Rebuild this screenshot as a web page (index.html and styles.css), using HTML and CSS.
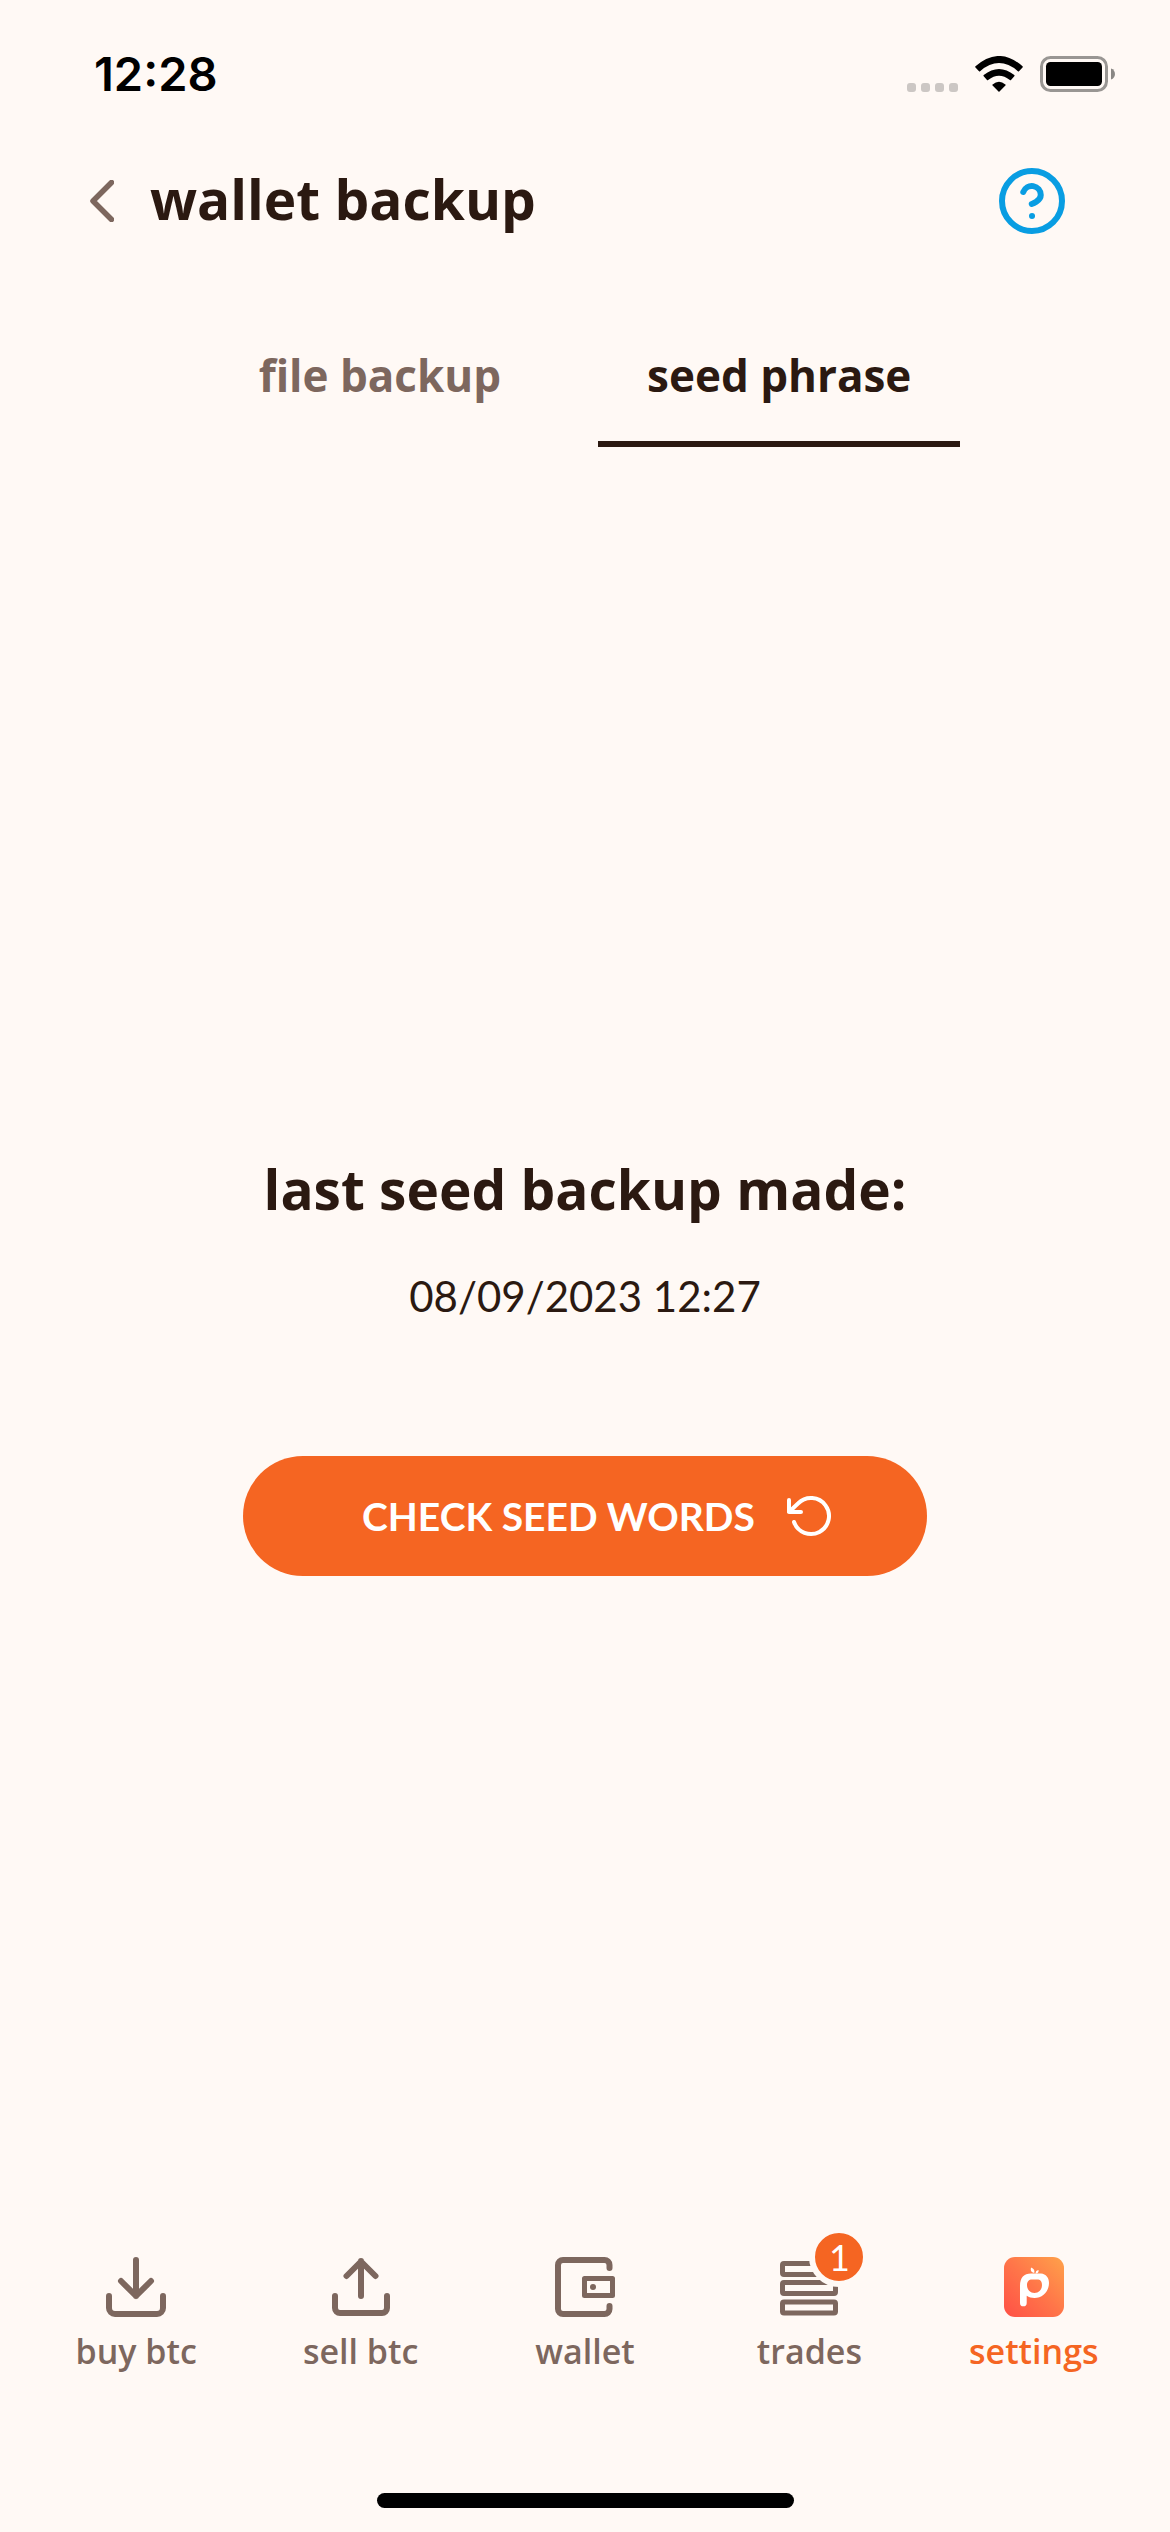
FILE: index.html
```html
<!DOCTYPE html>
<html lang="en">
<head>
<meta charset="utf-8">
<meta name="viewport" content="width=device-width, initial-scale=1">
<title>wallet backup</title>
<link rel="stylesheet" href="styles.css">
</head>
<body>
<div class="app">
  <div class="status">
    <span class="clock">12:28</span>
    <div class="indicators">
      <div class="signal"><i></i><i></i><i></i><i></i></div>
      <svg class="wifi" viewBox="0 0 48 36" aria-hidden="true">
        <path d="M.5 11.5a.8.8 0 0 1 0-1.200Q24-10.400 47.500 10.300a.8.8 0 0 1 0 1.200L44 15.200a.8.8 0 0 1-1.100 0Q24-1 5.100 15.200a.8.8 0 0 1-1.100 0Z"/>
        <path d="M8.700 20.200a.8.8 0 0 1 0-1.200Q24 7 39.300 19a.8.8 0 0 1 0 1.200L36 24a.8.8 0 0 1-1.100 0Q24 15.300 13.100 24A.8.8 0 0 1 12 24Z"/>
        <path d="M17.600 29.600a.8.8 0 0 1 0-1.200Q24 23.200 30.400 28.400a.8.8 0 0 1 0 1.200L24.500 35.600a.8.8 0 0 1-1 0Z"/>
      </svg>
      <svg class="battery" viewBox="0 0 76 36" aria-hidden="true">
        <rect x="1.500" y="1.500" width="65" height="33" rx="9" fill="none" stroke="#999693" stroke-width="3"/>
        <rect x="6" y="6" width="56" height="24" rx="4.500"/>
        <path d="M71 12.500c5.300 1.600 5.300 9.400 0 11Z" fill="#8a8784"/>
      </svg>
    </div>
  </div>

  <header class="header">
    <button class="icon-button back" aria-label="back">
      <svg width="24" height="42" viewBox="0 0 24 42"><path d="M21.500 2.500 3 21l18.500 18.500" stroke-width="5.500"/></svg>
    </button>
    <h1 class="title">wallet backup</h1>
    <button class="icon-button help" aria-label="help">
      <svg width="66" height="66" viewBox="1 1 22 22"><circle cx="12" cy="12" r="10"/><path d="M9.090 9a3 3 0 0 1 5.830 1c0 2-3 3-3 3M12 17h.01"/></svg>
    </button>
  </header>

  <div class="tabs" role="tablist">
    <button class="tab" role="tab" aria-selected="false">file backup</button>
    <button class="tab active" role="tab" aria-selected="true">seed phrase</button>
  </div>

  <main class="content">
    <h2 class="heading">last seed backup made:</h2>
    <p class="date">08/09/2023 12:27</p>
    <button class="primary">
      <span>CHECK SEED WORDS</span>
      <svg width="48" height="48" viewBox="0 0 24 24" aria-hidden="true"><path d="M1 4v6h6M3.510 15a9 9 0 1 0 2.130-9.360L1 10"/></svg>
    </button>
  </main>

  <nav class="nav">
    <a class="item" href="#buy">
      <svg viewBox="0 0 60 60"><path d="M3 39v12a6 6 0 0 0 6 6h42a6 6 0 0 0 6-6V39M30 3v36M15 24l15 15 15-15"/></svg>
      <span>buy btc</span>
    </a>
    <a class="item" href="#sell">
      <svg viewBox="0 0 60 60"><path d="M4 39v12a5 5 0 0 0 5 5h42a5 5 0 0 0 5-5V39M30 39V4M15.500 19 30 4.500 44.500 19"/></svg>
      <span>sell btc</span>
    </a>
    <a class="item" href="#wallet">
      <svg viewBox="0 0 60 60"><path d="M54.500 11V8a5 5 0 0 0-5-5H8a5 5 0 0 0-5 5v44a5 5 0 0 0 5 5h41.500a5 5 0 0 0 5-5v-3"/><rect x="29.500" y="21.500" width="28" height="17" stroke-width="5"/><circle class="dot" cx="38" cy="30" r="3"/></svg>
      <span>wallet</span>
    </a>
    <a class="item" href="#trades">
      <svg viewBox="0 0 60 60" class="stack"><rect x="3.500" y="6.500" width="53" height="11" rx="1.500"/><rect x="3.500" y="25.500" width="53" height="11" rx="1.500"/><rect x="3.500" y="45" width="53" height="11" rx="1.500"/></svg>
      <span>trades</span>
      <b class="badge">1</b>
    </a>
    <a class="item current" href="#settings">
      <svg viewBox="0 0 60 60" class="logo">
        <defs><linearGradient id="peach" x1="0" y1="1" x2="1" y2="0"><stop offset="0" stop-color="#ff5046"/><stop offset=".5" stop-color="#ff7549"/><stop offset="1" stop-color="#ffa24a"/></linearGradient></defs>
        <rect width="60" height="60" rx="11" fill="url(#peach)"/>
        <path fill="#fff" fill-rule="evenodd" d="M16 29C16 20.500 20 16.500 27 16.500h10c5 .5 8 4 8 9.500 0 9-7 15-14.500 15-3 0-5.500-.8-7.800-2.200V46a3.350 3.350 0 0 1-6.700 0ZM23 28c0 4.500 3 8 7.500 8s7.500-3.500 7.500-8c0-3.500-1.500-5.500-5-5.500h-5c-3 0-5 2-5 5.500Z"/>
        <path fill="#fff" d="M27 10.500c3 1 4 3 3.200 5.500-3-.5-4-2.500-3.200-5.500ZM34.500 13c.5 2-.5 3.300-2.800 3.500-.2-2 .8-3.200 2.800-3.500Z"/>
      </svg>
      <span>settings</span>
    </a>
  </nav>
  <div class="home"></div>
</div>
</body>
</html>
```
FILE: styles.css
```css
* { box-sizing: border-box; }
body {
  margin: 0;
  background: #fff9f5;
  color: #2b1911;
  font-family: "Open Sans", sans-serif;
}
button { border: 0; background: none; padding: 0; font: inherit; color: inherit; }
h1, h2, p { margin: 0; }
svg { display: block; flex: none; }

.app { min-height: 100vh; display: flex; flex-direction: column; }

.status {
  display: flex;
  justify-content: space-between;
  align-items: center;
  height: 148px;
  padding: 0 54px 0 94px;
}
.clock { font: 600 47px/56px Inter, sans-serif; color: #000; }
.indicators { display: flex; align-items: center; gap: 17px; }
.signal { display: flex; gap: 5px; padding-top: 26px; }
.signal i { width: 9px; height: 9px; border-radius: 3px; background: #ccc7c4; }
.wifi { width: 48px; height: 36px; }
.battery { width: 76px; height: 36px; }

.header {
  display: flex;
  align-items: center;
  height: 106px;
  padding: 0 105px 0 90px;
}
.icon-button svg { fill: none; stroke: currentColor; stroke-linecap: round; stroke-linejoin: round; }
.back { color: #7d675e; }
.help { color: #099de2; stroke-width: 2; }
.title { flex: 1; padding: 0 0 4px 36px; font-size: 55px; line-height: 72px; font-weight: 700; }

.tabs { display: flex; justify-content: center; gap: 48px; padding-top: 66px; }
.tab {
  padding: 27px 49px 37px;
  border-bottom: 6px solid transparent;
  font-size: 44px;
  line-height: 57px;
  font-weight: 700;
  color: #7d675e;
}
.tab.active { color: #2b1911; border-color: #2b1911; }

.content {
  flex: 1;
  display: flex;
  flex-direction: column;
  align-items: center;
  justify-content: center;
  padding-top: 24px;
}
.heading { font-size: 55px; line-height: 72px; font-weight: 700; }
.date { margin: 43px 0 131px; font: 400 42px/57px Lato, sans-serif; }
.primary {
  display: flex;
  align-items: center;
  justify-content: space-between;
  width: 684px;
  max-width: 100%;
  height: 120px;
  padding: 0 92px 0 119px;
  border-radius: 60px;
  background: #f56522;
  color: #fff;
  font: 700 39px/48px Lato, sans-serif;
}
.primary svg { fill: none; stroke: currentColor; stroke-width: 2; stroke-linecap: round; stroke-linejoin: round; }

.nav { display: grid; grid-template-columns: repeat(5, 1fr); padding: 0 24px; }
.item {
  position: relative;
  display: flex;
  flex-direction: column;
  align-items: center;
  gap: 10px;
  color: #7d675e;
  text-decoration: none;
  font-size: 34px;
  line-height: 48px;
  font-weight: 600;
}
.item svg { width: 60px; height: 60px; fill: none; stroke: currentColor; stroke-width: 6; stroke-linecap: round; stroke-linejoin: round; }
.item .stack { stroke-width: 5; }
.item .dot { fill: currentColor; stroke: none; }
.item .logo { stroke: none; }
.item.current { color: #f56522; }
.badge {
  position: absolute;
  left: 50%;
  top: -30px;
  width: 60px;
  height: 60px;
  border: 6px solid #fff9f5;
  border-radius: 50%;
  background: #f56522;
  color: #fff;
  font: 400 36px/48px Lato, sans-serif;
  text-align: center;
}

.home { width: 417px; height: 15px; margin: 118px auto 24px; border-radius: 8px; background: #000; }
```
